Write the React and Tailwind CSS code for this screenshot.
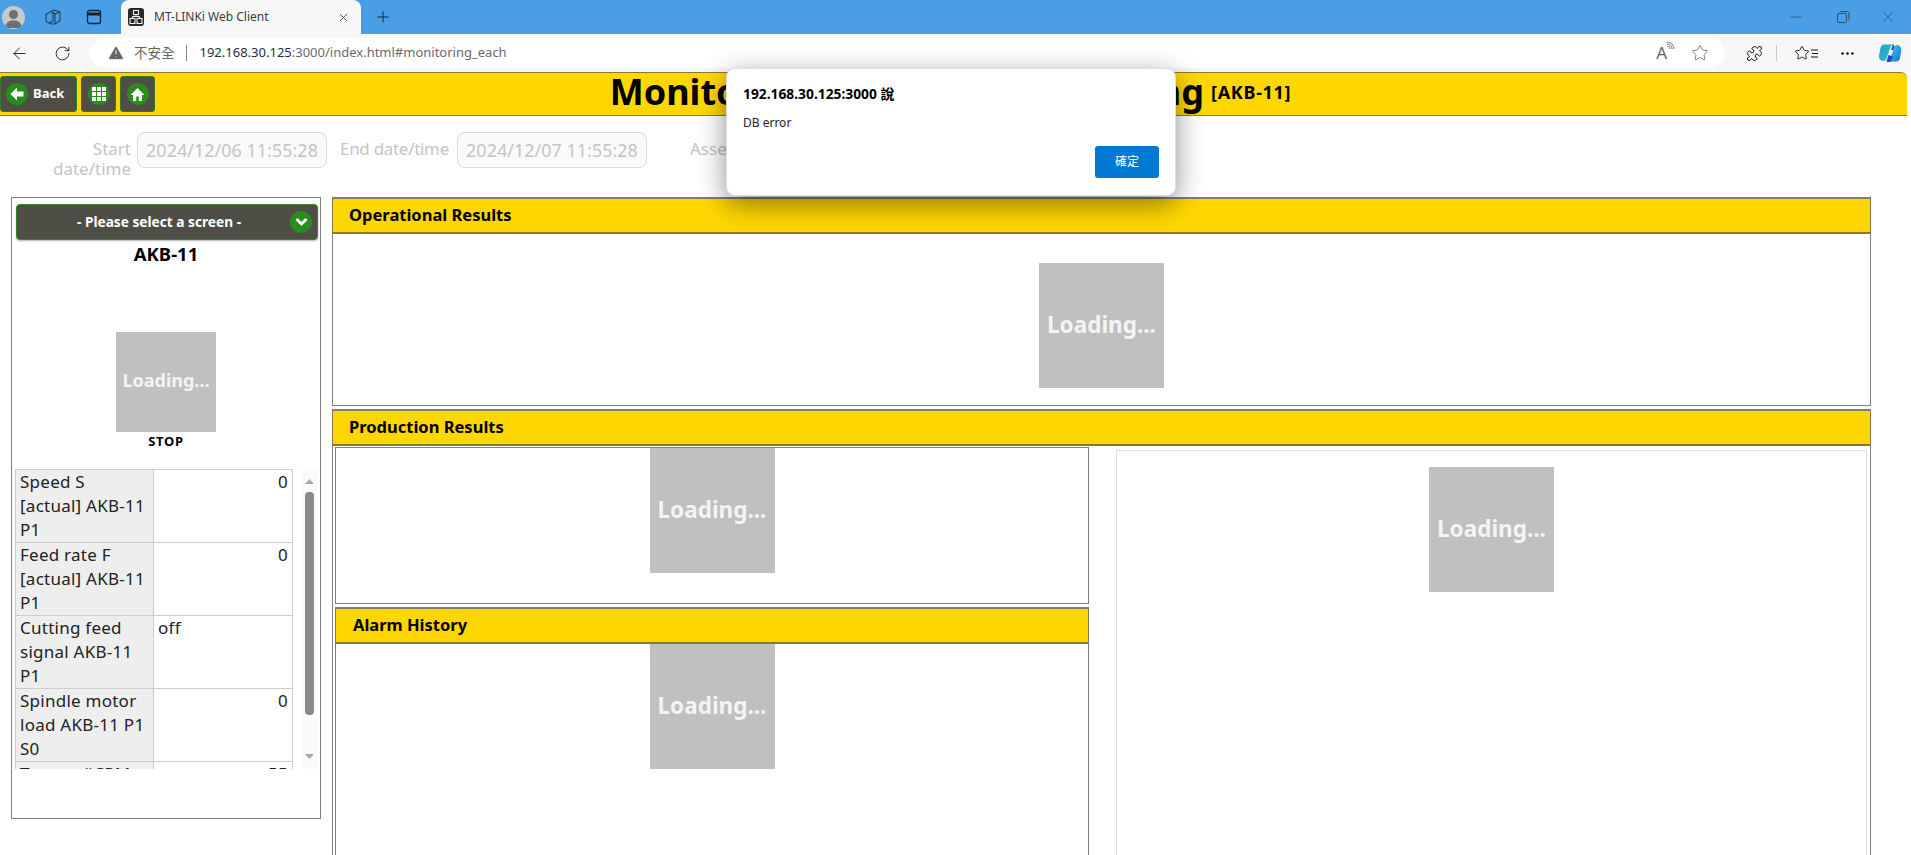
import React from "react";
import { ArrowLeft, RotateCw, TriangleAlert, Star, X, Plus, Minus, Ellipsis, Puzzle } from "lucide-react";

function LoadingBox({ big }) {
  return big ? (
    <div className="flex h-[125px] w-[125px] shrink-0 items-center justify-center bg-[#c0c0c0] pb-[2px] text-[22.5px] font-bold text-[#f4f4f4]">Loading...</div>
  ) : (
    <div className="flex h-[100px] w-[100px] shrink-0 items-center justify-center bg-[#c0c0c0] pb-[3px] text-[18px] font-bold text-[#f4f4f4]">Loading...</div>
  );
}

function SectionHeader({ title, pad }) {
  return (
    <div className={`flex h-[37px] shrink-0 items-center border-y-2 border-x border-y-[#8b7a1e] border-x-[#807a50] border-t-[#7f7f6a] bg-[#ffd700] text-[16.5px] font-bold text-black ${pad}`}>
      {title}
    </div>
  );
}

function Circle({ children }) {
  return <span className="flex h-[22px] w-[22px] shrink-0 items-center justify-center rounded-full bg-[#2a8c1c]">{children}</span>;
}

function NavButton({ children, cls }) {
  return (
    <button className={`flex h-[36px] items-center rounded-[3px] border border-[#2f7d20] bg-[#4e4e46] text-[13px] font-bold text-white ${cls}`}>{children}</button>
  );
}

const rows = [
  ["Speed S [actual] AKB-11 P1", "0", true],
  ["Feed rate F [actual] AKB-11 P1", "0", true],
  ["Cutting feed signal AKB-11 P1", "off", false],
  ["Spindle motor load AKB-11 P1 S0", "0", true],
  ["Torque #CPM AKB-11 P1", "55", true],
];

function Copilot() {
  return (
    <svg width="24" height="24" viewBox="0 0 24 24">
      <defs>
        <linearGradient id="c1" x1="0" y1="0" x2="1" y2="1">
          <stop offset="0" stopColor="#1f9be0" />
          <stop offset="1" stopColor="#2fc7a8" />
        </linearGradient>
        <linearGradient id="c2" x1="0" y1="0" x2="1" y2="1">
          <stop offset="0" stopColor="#3fd0f0" />
          <stop offset="1" stopColor="#1a6fd8" />
        </linearGradient>
      </defs>
      <path d="M6 3.5h7.5L8.5 17.5c-.5 1.5-1.6 2.5-3 2.5C2.5 20 .5 17.5 1 14.5L2.5 7C3 4.8 4.2 3.5 6 3.5Z" fill="url(#c1)" />
      <path d="M13.5 3c1.6 0 2.6 1 3 2.3L18 9h-5l1.5-4.5-1-1.5Z" fill="#0f5f8f" />
      <path d="M18.5 20.5H11l5-14c.5-1.5 1.6-2.5 3-2.5 2.8 0 4.7 2.5 4.3 5.5L22 17c-.5 2.2-1.7 3.5-3.5 3.5Z" fill="url(#c2)" />
      <path d="M8.5 20.5c1.5.8 3 .5 4.5 0l2-5-4.5-1.5-2 6.5Z" fill="#2343c8" />
    </svg>
  );
}

export default function App() {
  return (
    <div className="relative flex h-[855px] w-[1911px] flex-col overflow-hidden bg-white font-['Noto_Sans','Noto_Sans_CJK_TC',sans-serif]">
      {/* tab strip */}
      <div className="flex h-[34px] shrink-0 items-center bg-[#4a9ee5]">
        <div className="ml-[2px] flex h-[23px] w-[23px] items-end justify-center overflow-hidden rounded-full bg-[#c9c9c9]">
          <svg width="23" height="23" viewBox="0 0 23 23">
            <circle cx="11.5" cy="8.5" r="4.5" fill="#6f6f6f" />
            <path d="M3 22c1-6 4-7.5 8.5-7.5S19 16 20 22Z" fill="#6f6f6f" />
          </svg>
        </div>
        <svg className="ml-[19px]" width="18" height="18" viewBox="0 0 18 18" fill="none" stroke="#23405c" strokeWidth="1.1">
          <path d="M2 6.5 7 3.5l2 .8v8.5l-3.5 2.5L2 13.5Z" />
          <path d="M7 3.5 10 2l6 2v8.5l-5 3.5-5.5-.2" />
          <path d="M11 6v10M11 6l5-2M9 4.3 11 6" />
        </svg>
        <svg className="ml-[24px]" width="16" height="16" viewBox="0 0 16 16" fill="none" stroke="#10243a" strokeWidth="1.3">
          <rect x="1.5" y="1.5" width="13" height="13" rx="2" />
          <path d="M1.5 5h13" strokeWidth="3" />
        </svg>
        <div className="ml-[19px] flex h-[34px] w-[240px] items-center rounded-t-[8px] bg-[#f7f7f7] pl-[7px]">
          <span className="flex h-[18px] w-[16px] shrink-0 items-center justify-center rounded-[3px] bg-[#2a2a2a]">
            <svg width="14" height="16" viewBox="0 0 14 16" fill="none" stroke="#fff" strokeWidth="1">
              <rect x="4.5" y="1.5" width="5" height="4" />
              <rect x="1" y="9.5" width="5" height="5" />
              <rect x="8" y="9.5" width="5" height="5" />
              <path d="M7 5.5v2M3.5 9.5v-2h7v2" />
            </svg>
          </span>
          <span className="ml-[10px] w-[183px] shrink-0 text-[12px] text-[#3c3c3c]">MT-LINKi Web Client</span>
          <X size={13} strokeWidth={1.5} className="text-[#333]" />
        </div>
        <Plus size={18} strokeWidth={1.3} className="ml-[13px] text-[#10243a]" />
        <div className="flex-1" />
        <Minus size={18} strokeWidth={1} className="mr-[30px] text-[#2d5272]" />
        <svg className="mr-[28px]" width="16" height="16" viewBox="0 0 16 16" fill="none" stroke="#2d5272" strokeWidth="1">
          <rect x="2.5" y="4.5" width="9" height="9" rx="1.5" />
          <path d="M5 2.5h7a2 2 0 0 1 2 2v7" />
        </svg>
        <X size={18} strokeWidth={1} className="mr-[14px] text-[#2d5272]" />
      </div>

      {/* toolbar */}
      <div className="flex h-[38px] shrink-0 items-center bg-[#f7f7f7]">
        <ArrowLeft size={19} strokeWidth={1.2} className="ml-[10px] text-[#222]" />
        <RotateCw size={17} strokeWidth={1.3} className="ml-[25px] text-[#222]" />
        <div className="ml-[19px] flex h-[30px] w-[1635px] items-center rounded-full bg-white">
          <TriangleAlert size={18} fill="#666" stroke="#fff" strokeWidth={1.4} className="ml-[17px]" />
          <span className="ml-[9px] text-[13.5px] text-[#666]">不安全</span>
          <span className="ml-[11px] h-[16px] w-px bg-[#888]" />
          <span className="ml-[13px] text-[13px] text-[#1f2d3d]">
            192.168.30.125<span className="text-[#6b6b6b]">:3000/index.html#monitoring_each</span>
          </span>
          <div className="flex-1" />
          <span className="relative mr-[24px] text-[17px] text-[#666]">
            A
            <svg className="absolute right-[-8px] top-[1px]" width="9" height="9" viewBox="0 0 9 9" fill="none" stroke="#777" strokeWidth="1">
              <path d="M1 5a3 3 0 0 1 3 3M1 3a5 5 0 0 1 5 5M1 1a7 7 0 0 1 7 7" />
            </svg>
          </span>
          <Star size={18} strokeWidth={1} className="mr-[16px] text-[#555]" />
        </div>
        <Puzzle size={17} strokeWidth={1.4} className="ml-[21px] text-[#111]" />
        <span className="ml-[13px] h-[16px] w-px bg-[#c6c6c6]" />
        <Star size={16} strokeWidth={1.3} className="ml-[17px] text-[#111]" />
        <svg className="ml-[1px]" width="7" height="9" viewBox="0 0 7 9" stroke="#111" strokeWidth="1">
          <path d="M0 1h7M1 4.5h6M0 8h7" />
        </svg>
        <Ellipsis size={17} strokeWidth={1.8} className="ml-[21px] text-[#111]" />
        <span className="ml-[22px]">
          <Copilot />
        </span>
      </div>

      {/* page */}
      <div className="flex min-h-0 w-[1907px] flex-1 flex-col">
        {/* header */}
        <div className="flex h-[44px] shrink-0 items-center rounded-tr-[6px] border-y border-[#8b7a2a] bg-[#ffd700]">
          <div className="flex flex-1 gap-[4px]">
            <NavButton cls="w-[77px] gap-[5px] pl-[5px]">
              <Circle>
                <svg width="16" height="16" viewBox="0 0 16 16" fill="#fff">
                  <path d="M8 1.5 1.5 8 8 14.5V10.5h6.5v-5H8Z" />
                </svg>
              </Circle>
              Back
            </NavButton>
            <NavButton cls="w-[35px] justify-center">
              <Circle>
                <svg width="14" height="14" viewBox="0 0 14 14" fill="#fff">
                  <rect x="0" y="0" width="4" height="4" />
                  <rect x="5" y="0" width="4" height="4" />
                  <rect x="10" y="0" width="4" height="4" />
                  <rect x="0" y="5" width="4" height="4" />
                  <rect x="5" y="5" width="4" height="4" />
                  <rect x="10" y="5" width="4" height="4" />
                  <rect x="0" y="10" width="4" height="4" />
                  <rect x="5" y="10" width="4" height="4" />
                  <rect x="10" y="10" width="4" height="4" />
                </svg>
              </Circle>
            </NavButton>
            <NavButton cls="w-[35px] justify-center">
              <Circle>
                <svg width="15" height="15" viewBox="0 0 15 15" fill="#fff">
                  <path d="M7.5 1 0.5 8H3v6h3.2V9.5h2.6V14H12V8h2.5Z" />
                </svg>
              </Circle>
            </NavButton>
          </div>
          <div className="mr-[6px] flex items-center gap-[7px] text-black">
            <span className="pb-[5px] text-[36px] font-bold leading-[42px] [word-spacing:2.5px]">Monitoring per asset Monitoring</span>
            <span className="pb-[4px] text-[18px] font-bold tracking-[0.7px]">[AKB-11]</span>
          </div>
          <div className="flex-1" />
        </div>

        {/* form row */}
        <div className="flex h-[81px] shrink-0 items-start pt-[16px] text-[17px] leading-[20px] text-[#c4c4c4]">
          <div className="mt-[7px] w-[131px] text-right leading-[20px]">
            Start
            <br />
            date/time
          </div>
          <div className="ml-[6px] flex h-[36px] w-[190px] items-center justify-center rounded-[8px] border border-[#dcdcc0] bg-[#fafafa] text-[18px]">2024/12/06 11:55:28</div>
          <div className="ml-[13px] mt-[7px] tracking-[-0.3px]">End date/time</div>
          <div className="ml-[8px] flex h-[36px] w-[190px] items-center justify-center rounded-[8px] border border-[#dcdcc0] bg-[#fafafa] text-[18px]">2024/12/07 11:55:28</div>
          <div className="ml-[43px] mt-[7px]">Asset</div>
        </div>

        {/* main */}
        <div className="flex min-h-0 flex-1 items-start overflow-hidden">
          {/* left panel */}
          <div className="ml-[11px] flex h-[622px] w-[310px] shrink-0 flex-col items-center border border-[#808080] pt-[6px]">
            <div className="relative ml-[2px] flex h-[36px] w-[302px] shrink-0 items-center justify-center rounded-[4px] border border-[#2f8a22] bg-[#4e4e46] pr-[16px] text-[13.7px] font-bold text-white shadow-[0_1px_2px_rgba(0,0,0,0.3)]">
              - Please select a screen -
              <span className="absolute right-[5px] top-[6px] flex h-[22px] w-[22px] items-center justify-center rounded-full bg-[#2a8c1c]">
                <svg width="13" height="10" viewBox="0 0 13 10" fill="none" stroke="#fff" strokeWidth="3">
                  <path d="M1.5 2 6.5 7l5-5" />
                </svg>
              </span>
            </div>
            <div className="h-[28px] text-[18.5px] font-bold leading-[28px] text-black">AKB-11</div>
            <div className="mt-[64px]">
              <LoadingBox />
            </div>
            <div className="text-[13px] font-bold leading-[18px] tracking-[0.7px] text-black">STOP</div>
            <div className="mt-[19px] flex h-[300px] w-[302px] shrink-0 items-start overflow-hidden">
              <table className="w-[278px] shrink-0 table-fixed border-collapse text-[17px] leading-[24px] tracking-[0.25px] text-[#222]">
                <tbody>
                  {rows.map(([label, value, right]) => (
                    <tr key={label} className="h-[73px] align-top">
                      <td className="w-[138px] border border-[#cccccc] bg-[#eeeeee] pl-[4px] pr-[8px]">{label}</td>
                      <td className={`border border-[#cccccc] px-[4px] ${right ? "text-right" : "text-left"}`}>{value}</td>
                    </tr>
                  ))}
                </tbody>
              </table>
              <div className="ml-[9px] flex h-[300px] w-[15px] shrink-0 flex-col items-center bg-[#fafafa] pt-[10px]">
                <svg width="9" height="5" viewBox="0 0 9 5" fill="#aaa">
                  <path d="M4.5 0 9 5H0Z" />
                </svg>
                <div className="mt-[8px] h-[223px] w-[9px] rounded-[4px] bg-[#8a8a8a]" />
                <svg className="mt-[39px]" width="9" height="5" viewBox="0 0 9 5" fill="#aaa">
                  <path d="M0 0h9L4.5 5Z" />
                </svg>
              </div>
            </div>
          </div>

          {/* right column */}
          <div className="ml-[11px] flex w-[1539px] shrink-0 flex-col gap-[3px]">
            <div className="flex h-[209px] flex-col items-center border-x border-b border-[#808080]">
              <div className="-mx-px w-[1539px]">
                <SectionHeader title="Operational Results" pad="pl-[16px]" />
              </div>
              <div className="mt-[29px]">
                <LoadingBox big />
              </div>
            </div>

            <div className="flex h-[450px] flex-col border-x border-[#808080]">
              <div className="-mx-px">
                <SectionHeader title="Production Results" pad="pl-[16px]" />
              </div>
              <div className="flex min-h-0 flex-1 items-start pl-[2px]">
                <div className="flex w-[754px] shrink-0 flex-col gap-[3px] pt-[1px]">
                  <div className="flex h-[157px] justify-center border border-[#808080]">
                    <LoadingBox big />
                  </div>
                  <div className="flex h-[300px] flex-col items-center border-x border-[#808080]">
                    <div className="-mx-px w-[754px]">
                      <SectionHeader title="Alarm History" pad="pl-[17px]" />
                    </div>
                    <LoadingBox big />
                  </div>
                </div>
                <div className="ml-[27px] mt-[4px] flex h-[500px] w-[751px] shrink-0 justify-center border border-[#dddddd] pt-[16px]">
                  <LoadingBox big />
                </div>
              </div>
            </div>
          </div>
        </div>
      </div>

      {/* alert dialog */}
      <div className="absolute left-[726px] top-[68px] h-[128px] w-[450px] rounded-[9px] border border-[#dedede] bg-white shadow-[0_8px_28px_rgba(0,0,0,0.45)]">
        <div className="ml-[16px] mt-[16px] text-[13.8px] font-bold leading-[18px] text-black">192.168.30.125:3000 說</div>
        <div className="ml-[16px] mt-[11px] text-[12px] leading-[18px] text-[#222]">DB error</div>
        <button className="absolute left-[368px] top-[77px] h-[32px] w-[64px] rounded-[3px] bg-[#0078d4] text-[12px] text-white">確定</button>
      </div>
    </div>
  );
}
